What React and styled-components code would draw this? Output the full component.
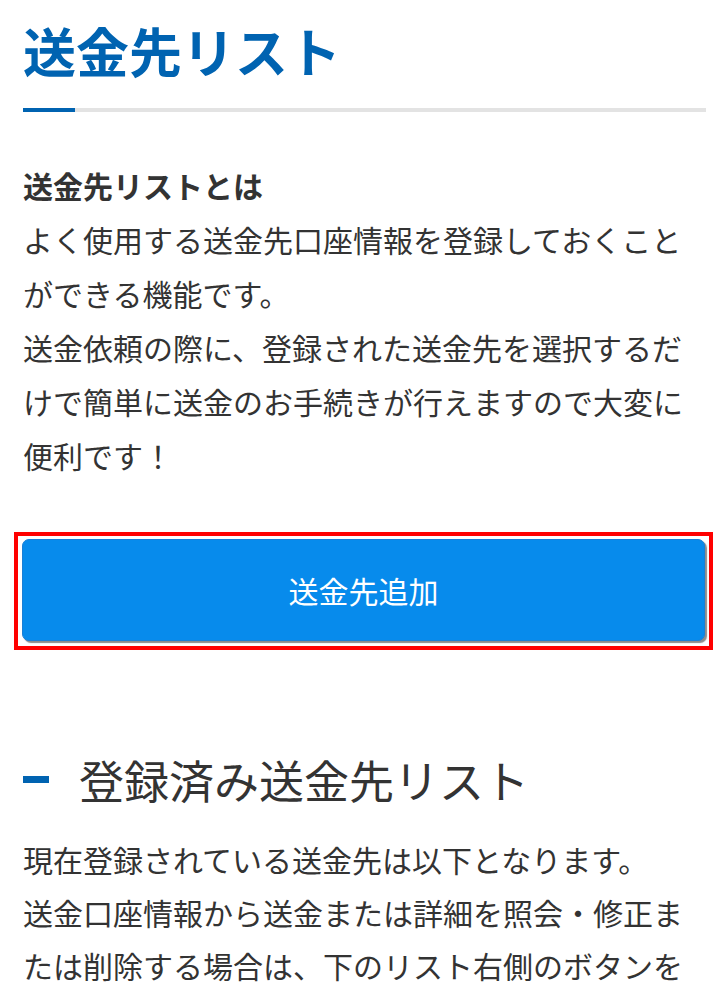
import React from "react";
import styled, { createGlobalStyle } from "styled-components";

const GlobalStyle = createGlobalStyle`
  html, body { margin: 0; padding: 0; background: #fff; }
  body {
    font-family: "Noto Sans CJK JP", "Noto Sans", sans-serif;
    color: #333;
  }
`;

const Page = styled.main`
  padding: 18px 20px 0 23px;
  width: 726px;
  box-sizing: border-box;
`;

const Title = styled.h1`
  margin: 0;
  font-size: 53px;
  line-height: 64px;
  font-weight: 700;
  color: #0063b1;
  letter-spacing: 0;
`;

const TitleRule = styled.div`
  margin-top: 26px;
  height: 4px;
  background: #e3e3e3;
  position: relative;
  &::before {
    content: "";
    position: absolute;
    left: 0;
    top: 0;
    width: 52px;
    height: 100%;
    background: #0063b1;
  }
`;

const Intro = styled.section`
  margin-top: 46px;
  font-size: 30px;
  line-height: 54px;
  color: #333;
`;

const IntroHead = styled.h2`
  margin: 0;
  font-size: 30px;
  line-height: 54px;
  font-weight: 700;
`;

const Para = styled.p`
  margin: 0;
`;

const Highlight = styled.div`
  margin: 50px 0 0 -9px;
  border: 4px solid #ff0000;
  padding: 3px 4px 5px 4px;
  width: 699px;
  box-sizing: border-box;
`;

const PrimaryButton = styled.button`
  display: flex;
  align-items: center;
  justify-content: center;
  width: 683px;
  height: 102px;
  border: 1px solid #1a7fd6;
  border-radius: 7px;
  background: #078bec;
  color: #fff;
  font-family: "Noto Sans CJK JP", "Noto Sans", sans-serif;
  font-size: 30px;
  font-weight: 400;
  box-shadow: 2px 2px 1px #8c8c8c;
  cursor: pointer;
  padding: 0;
`;

const SectionHead = styled.h2`
  margin: 98px 0 0;
  display: flex;
  align-items: center;
  gap: 30px;
  font-size: 45px;
  line-height: 63px;
  font-weight: 400;
  color: #333;
  &::before {
    content: "";
    display: block;
    width: 26px;
    height: 7px;
    background: #0063b1;
  }
`;

const SectionBody = styled.section`
  margin-top: 22px;
  font-size: 30px;
  line-height: 53px;
  color: #333;
`;

export default function App() {
  return (
    <>
      <GlobalStyle />
      <Page>
        <Title>送金先リスト</Title>
        <TitleRule />
        <Intro>
          <IntroHead>送金先リストとは</IntroHead>
          <Para>
            よく使用する送金先口座情報を登録しておくことができる機能です。
          </Para>
          <Para>
            送金依頼の際に、登録された送金先を選択するだけで簡単に送金のお手続きが行えますので大変に便利です！
          </Para>
        </Intro>
        <Highlight>
          <PrimaryButton type="button">送金先追加</PrimaryButton>
        </Highlight>
        <SectionHead>登録済み送金先リスト</SectionHead>
        <SectionBody>
          <Para>現在登録されている送金先は以下となります。</Para>
          <Para>
            送金口座情報から送金または詳細を照会・修正または削除する場合は、下のリスト右側のボタンを押してください。
          </Para>
        </SectionBody>
      </Page>
    </>
  );
}
